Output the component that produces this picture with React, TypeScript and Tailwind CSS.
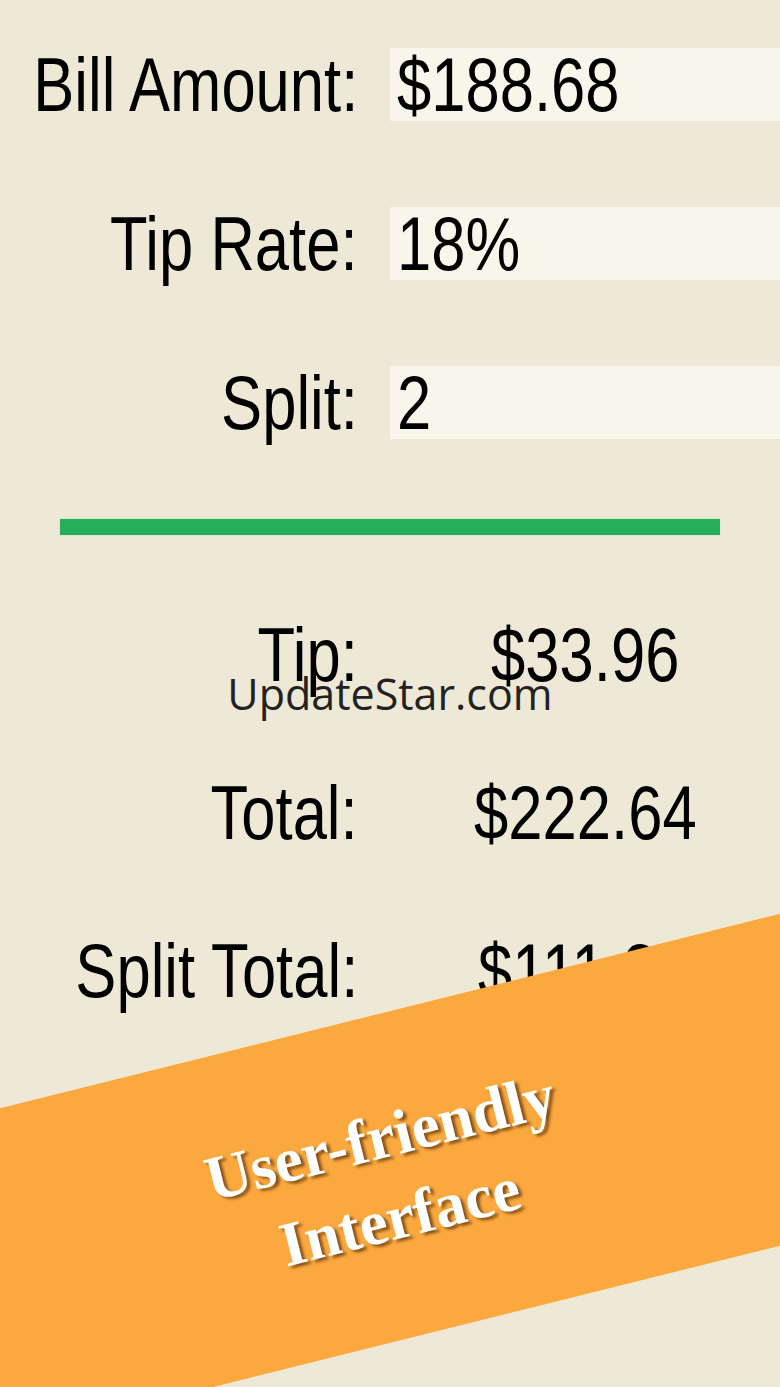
import React from "react";

const inputs = [
  { label: "Bill Amount:", value: "$188.68" },
  { label: "Tip Rate:", value: "18%" },
  { label: "Split:", value: "2" },
];

const results = [
  { label: "Tip:", value: "$33.96" },
  { label: "Total:", value: "$222.64" },
  { label: "Split Total:", value: "$111.32" },
];

const sans = { fontFamily: '"Liberation Sans", Arial, sans-serif' };

export default function App() {
  return (
    <div className="relative h-[1387px] w-[780px] overflow-hidden bg-[#EEE9D6] text-black" style={sans}>
      {/* Inputs */}
      <div className="flex flex-col gap-[86px] pt-[48px]">
        {inputs.map((row) => (
          <div key={row.label} className="flex h-[73px] items-center">
            <div className="flex w-[358px] shrink-0 justify-end whitespace-nowrap text-[76px] leading-none">
              <span className="inline-block origin-right scale-x-[0.81]">{row.label}</span>
            </div>
            <div className="ml-[32px] flex h-full flex-1 items-center whitespace-nowrap bg-[#F8F6EA] pl-[7px] text-[76px] leading-none">
              <span className="inline-block origin-left scale-x-[0.81]">{row.value}</span>
            </div>
          </div>
        ))}
      </div>

      {/* Divider */}
      <div className="mx-[60px] mt-[80px] h-[16px] bg-[#26AF5B] shadow-[0_0_1px_#9be3a6]" />

      {/* Results */}
      <div className="mt-[80px] flex flex-col gap-[78px]">
        {results.map((row) => (
          <div key={row.label} className="flex h-[80px] items-center">
            <div className="flex w-[358px] shrink-0 justify-end whitespace-nowrap text-[76px] leading-none">
              <span className="inline-block origin-right scale-x-[0.81]">{row.label}</span>
            </div>
            <div className="ml-[32px] flex-1 whitespace-nowrap text-center text-[76px] leading-none">
              <span className="inline-block origin-center scale-x-[0.81]">{row.value}</span>
            </div>
          </div>
        ))}
      </div>

      {/* Watermark */}
      <div
        className="absolute left-0 top-[672px] w-full text-center text-[43px] leading-none text-[#222]"
        style={{ fontFamily: '"Open Sans", "Noto Sans", sans-serif' }}
      >
        UpdateStar.com
      </div>

      {/* Promo banner */}
      <div className="absolute left-[-260px] top-[1016px] flex h-[322px] w-[1300px] -rotate-[14deg] flex-col items-center justify-center bg-[#FBA83E]">
        <div
          className="text-center text-[63px] font-bold leading-[82px] text-white [text-shadow:3px_3px_3px_rgba(70,35,0,0.65)]"
          style={{ fontFamily: '"Liberation Serif", "Times New Roman", serif' }}
        >
          <div>User-friendly</div>
          <div>Interface</div>
        </div>
      </div>
    </div>
  );
}
